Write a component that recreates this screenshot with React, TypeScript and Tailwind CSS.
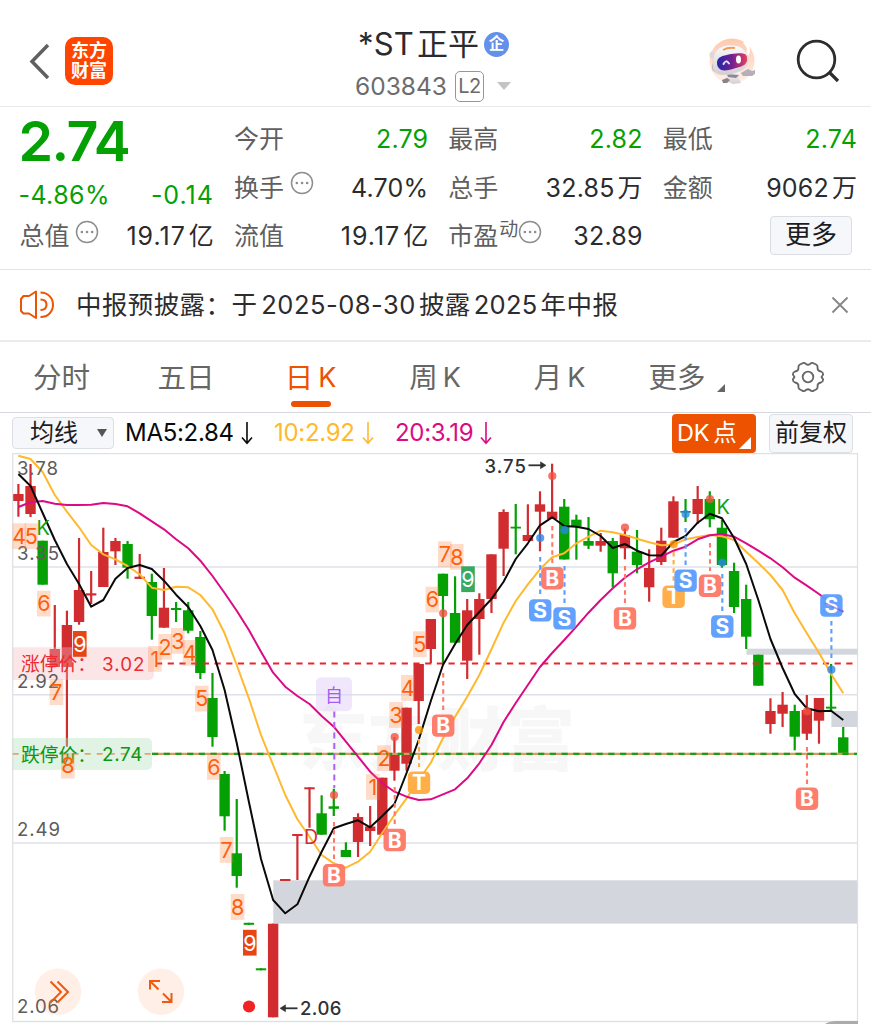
import type { ReactNode } from "react";
import clsx from "clsx";

const UP = "#d12d31";
const DOWN = "#04a004";

const candleX = (i: number) => 18.4 + i * 12.13;

// direction, high, body top, body bottom, low
type Candle = ["u" | "d", number, number, number, number];

const CANDLES: Candle[] = [
  ["u", 484, 494, 501, 516.7],
  ["u", 464, 486, 514, 517],
  ["d", 540.7, 540.7, 584.7, 584.7],
  ["u", 605, 649, 667, 667],
  ["u", 610.7, 625, 667, 746.7],
  ["u", 538, 590, 622, 624.7],
  ["u", 571, 593.3, 595.5, 604],
  ["u", 527.7, 552, 587, 587],
  ["u", 538, 541, 551.3, 565],
  ["d", 541, 544, 567.7, 578.7],
  ["u", 554, 576.7, 578.9, 578.9],
  ["d", 573.7, 582, 616, 639.7],
  ["u", 568, 607.7, 627.7, 627.7],
  ["d", 602, 608, 610, 622],
  ["d", 602, 610.3, 630.7, 633.3],
  ["d", 631, 637, 673, 679],
  ["d", 673, 698, 737, 746.7],
  ["d", 771, 774, 816.3, 830.7],
  ["d", 799, 853.3, 876, 887.7],
  ["d", 922.8, 922.8, 924.8, 924.8],
  ["d", 968.3, 968.3, 970.3, 970.3],
  ["u", 923.7, 923.7, 1017.3, 1017.3],
  ["u", 879, 879, 881, 881],
  ["u", 834, 834, 836, 880],
  ["u", 787.3, 787.3, 789.3, 827.7],
  ["d", 795.3, 813.3, 834.7, 834.7],
  ["d", 788.7, 806.3, 808.8, 816],
  ["d", 842.3, 850, 857, 857],
  ["u", 813.3, 817, 842, 857],
  ["u", 806, 826.5, 831, 846],
  ["u", 777.7, 777.7, 834.7, 834.7],
  ["u", 737, 754.3, 770.7, 780.7],
  ["u", 707.7, 707.7, 763.7, 770.7],
  ["u", 664, 664, 701, 724],
  ["u", 619, 619, 649, 663.3],
  ["d", 573.7, 573.7, 596, 663],
  ["d", 576.3, 613, 642.7, 642.7],
  ["u", 599, 610.3, 660.7, 679],
  ["u", 593.3, 599, 619, 654.7],
  ["u", 554.3, 554.3, 599, 613],
  ["u", 509.3, 512, 548.7, 576],
  ["d", 504, 526.7, 528.5, 554.3],
  ["u", 504.3, 535, 541, 541],
  ["u", 491.3, 504.3, 511.7, 551.3],
  ["u", 463.7, 511.7, 519, 519],
  ["d", 499, 506.7, 559.5, 559.5],
  ["d", 514.7, 519.7, 526.7, 559.7],
  ["d", 517, 541, 545.7, 549],
  ["u", 533, 541, 545.7, 551.7],
  ["d", 538, 541, 573.3, 587.3],
  ["u", 528.7, 535, 548.3, 559.3],
  ["d", 530, 551.7, 565, 573.3],
  ["u", 549.3, 568, 587.3, 601.7],
  ["u", 527.7, 540.7, 562, 565],
  ["u", 496.3, 501.3, 537.7, 537.7],
  ["d", 499, 511, 512.7, 522],
  ["u", 486, 499, 514, 524],
  ["d", 491.3, 499, 519.3, 527.3],
  ["d", 519.7, 527.7, 565, 567.7],
  ["d", 562.7, 571, 607, 613],
  ["d", 584.7, 599, 636.7, 649],
  ["d", 654.7, 654.7, 685.7, 685.7],
  ["u", 698.3, 711, 724, 733.7],
  ["u", 692, 704.7, 713.7, 727],
  ["d", 704.7, 711, 736.7, 750.3],
  ["u", 695, 710, 733.7, 740],
  ["u", 698, 698, 720.7, 743.7],
  ["d", 664, 706.7, 708.6, 711.7],
  ["d", 727, 737.3, 753.5, 753.5],
];

const MA5 = [
  474, 486, 513, 540, 564, 584, 606.7, 600, 578.7, 568, 565, 569, 580.7, 594.7, 607, 626, 650,
  690, 743, 801.7, 859, 900, 913.3, 904.3, 876.7, 851.7, 828.3, 824, 820.3, 827.3, 816, 804,
  773, 740, 701, 665, 644, 625, 612, 599, 581.7, 559, 543.3, 525.3, 517.3, 526, 526.7, 529, 536,
  548, 544, 550.7, 555.3, 555.6, 542, 536, 522.7, 513.7, 518.3, 538, 564, 600, 639, 668, 694,
  708.3, 711.3, 710.7, 720,
];
const MA10 = [
  455.7, 459, 472, 495, 511.7, 527.3, 545, 554.3, 559.3, 566, 574.3, 587.7, 590, 586.7, 587.3,
  595, 609.3, 633.3, 665, 698.3, 735, 765, 795, 819.3, 836.7, 855, 863.3, 867.7, 861.7, 851.7,
  833, 815, 798.3, 780, 762.7, 738.3, 716.7, 696.7, 675, 649.3, 622.7, 601, 584.3, 569.3, 557.3,
  553.3, 543.3, 536.7, 530.7, 532.3, 535, 538.7, 542.3, 545.3, 544.7, 539.3, 537, 535, 536.3,
  540, 551.7, 563, 575, 590, 613.3, 633.3, 652.7, 674, 693.3,
];
const MA20 = [
  507, 502.3, 501, 503.7, 505, 505, 504.7, 503, 504, 506.3, 513.3, 521.3, 529.3, 539.3, 548.3,
  560.7, 576, 593, 610.7, 630, 651.7, 672.7, 686.7, 696, 704, 716, 726.7, 741.7, 756.7, 771.7,
  783.3, 791.7, 796.7, 800, 799.3, 794.3, 789.3, 778.3, 763.3, 745, 722, 703, 685, 667, 653, 640,
  626.7, 612.7, 600, 588.3, 577.7, 569.3, 562.3, 556.7, 550.7, 546.7, 539.3, 535.3, 534, 536.7,
  543.3, 550.7, 558.3, 567.3, 577.7, 585.7, 594, 603.3, 611.7,
];

const toPoints = (ys: number[]) => ys.map((y, i) => `${candleX(i)},${y}`).join(" ");

// left, top, digit, fill
const COUNTS: [number, number, string, string?][] = [
  [12.5, 523.3, "4"],
  [24.6, 523.3, "5"],
  [37, 590.7, "6"],
  [49.6, 679.3, "7"],
  [61, 752.7, "8"],
  [73, 631, "9", "#e64614"],
  [148, 646, "1"],
  [158.3, 634, "2"],
  [171, 628, "3"],
  [182.8, 640, "4"],
  [195, 685.7, "5"],
  [207, 754, "6"],
  [219.8, 837, "7"],
  [230.8, 894, "8"],
  [243, 929.8, "9", "#e64614"],
  [366, 774, "1"],
  [377.3, 745.3, "2"],
  [389.3, 702, "3"],
  [401, 675, "4"],
  [413, 631.3, "5"],
  [425.5, 586.7, "6"],
  [438, 541.3, "7"],
  [450, 544, "8"],
  [461.2, 566.3, "9", "#39a860"],
];

const SIGNAL_COLORS = { B: "#fe7968", S: "#5c9dfd", T: "#ffab42" };
const DOT_COLORS = { B: "#f4513f", S: "#2a86ec", T: "#ff9500" };

// kind, x, badge center, dot, dash start, dash end
const SIGNALS: ["B" | "S" | "T", number, number, number, number, number][] = [
  ["B", 334, 875.3, 795, 822, 860],
  ["B", 394.7, 840, 737, 787, 824],
  ["T", 419, 782.7, 730, 739, 767],
  ["B", 443.2, 725.6, 613.3, 673, 710],
  ["B", 552.3, 578.2, 476, 526, 563],
  ["S", 540.2, 610.4, 538, 557, 595],
  ["S", 564.5, 618.4, 530.2, 566, 603],
  ["B", 625, 618.4, 527.5, 566, 603],
  ["T", 673.6, 596.8, 544.3, 552, 582],
  ["S", 685.6, 580.6, 514, 528, 565],
  ["B", 710, 585.8, 499, 543, 571],
  ["S", 722.3, 626.5, 562.5, 574, 611],
  ["S", 831.4, 605.5, 669.7, 621, 658],
  ["B", 807, 798.7, 711.3, 747, 784],
];

const KChart = () => (
  <svg
    viewBox="0 453 871 571"
    className="block h-[571px] w-[871px] font-['Inter','Noto_Sans_CJK_SC',sans-serif]"
  >
    <text x="299" y="765" fontSize="69" fontWeight="900" fill="#f7f7f8">
      东方财富
    </text>

    {/* Grid */}
    <g fill="none" stroke="#dfe2e9" strokeWidth="1.6">
      <path d="M12.7 567H857.5M12.7 694.8H857.5M12.7 843H857.5" />
      <path d="M12.7 453.5H857.5V1021.5H12.7Z" stroke="#e0e1e4" strokeWidth="1.3" />
    </g>

    {/* Gaps */}
    <g fill="#d3d6dc">
      <rect x="273.3" y="880.3" width="584" height="43.3" />
      <rect x="746.5" y="648.7" width="111" height="6" />
      <rect x="831.4" y="711" width="26" height="16" />
    </g>

    {/* Candles */}
    {CANDLES.map(([dir, high, top, bottom, low], i) => {
      const color = dir === "u" ? UP : DOWN;
      return (
        <g key={i} fill={color}>
          <rect x={candleX(i) - 1.1} y={high} width="2.2" height={low - high} />
          <rect x={candleX(i) - 5.2} y={top} width="10.4" height={bottom - top} />
        </g>
      );
    })}

    {/* Limit prices */}
    <path d="M12.7 647.3H149a5 5 0 0 1 5 5V675a5 5 0 0 1-5 5H12.7Z" fill="#f8b9bf" opacity=".37" />
    <path d="M12.7 738H147a5 5 0 0 1 5 5V765a5 5 0 0 1-5 5H12.7Z" fill="#b5e1bb" opacity=".4" />
    <path d="M156 663.5H853" stroke="#e9262d" strokeWidth="2" strokeDasharray="6.2 5.5" />
    <path d="M12.7 753.8H152" stroke="#dba574" strokeWidth="1.8" strokeDasharray="6 6" />
    <path d="M152 753.8H857" stroke="#d69a63" strokeWidth="2.2" />
    <path d="M152 753.8H857" stroke="#16a016" strokeWidth="2.2" strokeDasharray="6.2 5.5" />

    {/* Moving averages */}
    <g fill="none" strokeWidth="2" strokeLinejoin="round">
      <polyline points={toPoints(MA10)} stroke="#ffb92e" />
      <polyline points={toPoints(MA20)} stroke="#dc0a85" />
      <polyline points={toPoints(MA5)} stroke="#0a0a0a" />
    </g>

    {/* Axis labels */}
    <g fontSize="18.6" fill="#5c5c5c">
      <text x="17" y="474.5" textLength="41">3.78</text>
      <text x="17" y="560" textLength="42">3.35</text>
      <text x="17" y="687.8" textLength="42">2.92</text>
      <text x="17" y="836.3" textLength="43">2.49</text>
      <text x="17" y="1013.3" textLength="42">2.06</text>
    </g>

    <g fontSize="18.8">
      <text x="21" y="670.5" fill="#ee2b32">涨停价：</text>
      <text x="102" y="670.5" textLength="42.5" fill="#ee2b32">3.02</text>
      <text x="21" y="761.5" fill="#069a14">跌停价：</text>
      <text x="102" y="761" textLength="40.5" fill="#069a14">2.74</text>
    </g>

    {/* Sequence counts */}
    {COUNTS.map(([x, y, digit, fill], i) => (
      <g key={i}>
        <rect x={x} y={y} width="13.6" height="25.8" fill={fill ?? "#ff7d3c"} opacity={fill ? 1 : 0.27} />
        <text x={x + 6.8} y={y + 20.7} fontSize="21.5" textAnchor="middle" fill={fill ? "#fff" : "#ff5f0a"}>
          {digit}
        </text>
      </g>
    ))}

    <g fontSize="20" fill="#16a016">
      <text x="36.5" y="535.3">K</text>
      <text x="716.5" y="514.3">K</text>
    </g>
    <text x="304" y="843.8" fontSize="19.5" fill={UP}>D</text>

    {/* Signals */}
    {SIGNALS.map(([kind, x, y, dot, from, to], i) => (
      <g key={i}>
        <path d={`M${x} ${from}V${to}`} stroke={SIGNAL_COLORS[kind]} strokeWidth="2.1" strokeDasharray="4.5 3.6" />
        <circle cx={x} cy={dot} r="4.1" fill={DOT_COLORS[kind]} opacity=".8" />
        <rect x={x - 11.2} y={y - 11.2} width="22.4" height="22.4" rx="4.5" fill={SIGNAL_COLORS[kind]} opacity=".96" />
        <text x={x} y={y + 7.5} fontSize="21" fontWeight="700" textAnchor="middle" fill="#fff">
          {kind}
        </text>
      </g>
    ))}
    <path d="M825 603 843.3 611.7" stroke="#7a51d2" strokeWidth="1.5" opacity=".6" />

    {/* Watchlist marker */}
    <rect x="316" y="677.3" width="36" height="34" rx="5" fill="#e2cdfb" opacity=".48" />
    <text x="334" y="701.5" fontSize="18" textAnchor="middle" fill="#a55bf5">自</text>
    <path d="M334.3 711.5V788" stroke="#a862f5" strokeWidth="2" strokeDasharray="6 4.5" />

    {/* High and low */}
    <g fontSize="18.5" fontWeight="500" fill="#303133">
      <text x="484.5" y="472.5" textLength="41.5">3.75</text>
      <text x="300" y="1015.3" textLength="41.5">2.06</text>
    </g>
    <g fill="#303133" stroke="#303133" strokeWidth="1.8">
      <path d="M528.5 465.3H542" />
      <path d="M540.5 461.8 546 465.3 540.5 468.8Z" strokeWidth=".5" />
      <path d="M284 1008.3H297.5" />
      <path d="M285.5 1004.8 280 1008.3 285.5 1011.8Z" strokeWidth=".5" />
    </g>
    <circle cx="249" cy="1006.5" r="6.1" fill="#f42323" />

    {/* Floating controls */}
    <g fill="none" stroke="#ed5a10" strokeWidth="2">
      <circle cx="58" cy="991.7" r="23.2" fill="#fd6a1c" fillOpacity=".11" stroke="none" />
      <circle cx="161" cy="991.7" r="23.2" fill="#fd6a1c" fillOpacity=".11" stroke="none" />
      <path d="M50.5 981.5 61 992 50.5 1002.5M57.5 981.5 68 992 57.5 1002.5" />
      <path d="M150 989.5V981H160M150.5 981.5 158.5 989.5M171.5 993V1002H162M163 993.5 171 1001.5" />
    </g>
    <path d="M825 1024Q829 1021 837 1021H858V1024Z" fill="#a9abaf" />
  </svg>
);

const MoreDots = ({ className }: { className?: string }) => (
  <svg viewBox="0 0 24 24" className={clsx("size-6 shrink-0", className)} fill="none" stroke="#8e8e8e">
    <circle cx="12" cy="12" r="10.5" strokeWidth="1.5" />
    <path d="M6.8 12h.1M12 12h.1M17.1 12h.1" strokeWidth="2.5" strokeLinecap="round" />
  </svg>
);

const Cell = ({ label, value, green, extra }: { label: string; value: string; green?: boolean; extra?: ReactNode }) => {
  const [, num, unit] = value.match(/^([\d.%]+)(.*)$/)!;
  return (
    <div className="flex h-[48.5px] items-center justify-between">
      <span className="flex items-center text-[#5f5f5f]">
        {label}
        {extra}
      </span>
      <span className={clsx("flex items-center", green ? "text-[#04a004]" : "text-[#2b2b2e]")}>
        <span className={num.includes("1") ? "tracking-[1px]" : "tracking-[0.2px]"}>{num}</span>
        {unit && <span className="ml-[3px]">{unit}</span>}
      </span>
    </div>
  );
};

const Avatar = () => (
  <svg viewBox="0 0 48 48" className="size-12">
    <defs>
      <linearGradient id="visor" x1="0" y1="0" x2="1" y2="0">
        <stop offset="0" stopColor="#2425a8" />
        <stop offset=".5" stopColor="#732090" />
        <stop offset="1" stopColor="#e4425f" />
      </linearGradient>
      <linearGradient id="halo" x1="0" y1="0" x2="0" y2="1">
        <stop offset="0" stopColor="#ffc9ac" />
        <stop offset="1" stopColor="#fff1e9" />
      </linearGradient>
      <linearGradient id="shell" x1="0" y1="0" x2="0" y2="1">
        <stop offset="0" stopColor="#fdfbfa" />
        <stop offset="1" stopColor="#d2cdd2" />
      </linearGradient>
    </defs>
    <circle cx="24" cy="24" r="22.5" fill="url(#halo)" />
    <path d="M36 5c5 4 6 9 2 14" fill="none" stroke="#fff" strokeWidth="3" />
    <path d="M17 34h15l-1 8 2 4-8 1-6-3Z" fill="url(#shell)" />
    <path d="M33 36l7-4 4 2 3-1v4l-3 2-9 0Z" fill="#b5afba" />
    <path d="M19 37l12 1-3 3-8-1Z" fill="#8d8894" />
    <path d="M14 43l5-2 3 2-3 3h-4Z" fill="#8a828a" />
    <ellipse cx="4" cy="18" rx="2.5" ry="3.5" fill="#ddd8dc" />
    <ellipse cx="7" cy="30" rx="3" ry="4.5" fill="#b9b3bd" />
    <path
      d="M5 22C6 12 14 8 23 8c9 0 15 4 17 12 1 10-5 14-17 17C13 39 6 37 5 31Z"
      fill="url(#shell)"
      stroke="#d9d1d4"
      strokeWidth=".6"
    />
    <path d="M15 13q5-3 12-2" stroke="#f39b57" strokeWidth="2" fill="none" />
    <path d="M9 25c1-5 4-6 14-8 9-1 15-2 16 3 1 7-3 9-11 11-9 3-15 4-18-1-1-2-1-3-1-5Z" fill="url(#visor)" />
    <path d="M15.5 27q2.5-5 5.5-.5" stroke="#d7e2ff" strokeWidth="2" fill="none" strokeLinecap="round" />
    <ellipse cx="30.5" cy="22.5" rx="2.5" ry="4" fill="#fff" />
  </svg>
);

const DownArrow = () => (
  <svg viewBox="0 0 12 24" className="ml-[7px] h-6 w-3" fill="none" stroke="currentColor" strokeWidth="1.6">
    <path d="M6 1V22M1 16.5 6 22.3 11 16.5" />
  </svg>
);

const TABS = [
  { label: "分时", shift: "-ml-px" },
  { label: "五日", shift: "" },
  { label: "日", suffix: "K", shift: "ml-px", active: true },
  { label: "周", suffix: "K", shift: "ml-[2px]" },
  { label: "月", suffix: "K", shift: "ml-[3px]" },
  { label: "更多", shift: "-ml-[7px]", more: true },
];

const App = () => {
  return (
    <div className="h-[1024px] w-[871px] overflow-hidden bg-white font-['Inter','Noto_Sans_CJK_SC',sans-serif]">
      {/* Header */}
      <header className="grid h-[107px] grid-cols-[1fr_auto_1fr] border-b-[1.5px] border-[#e9e9e9] pt-[20px]">
        <div className="flex h-[81px] items-center pl-[28px]">
          <svg viewBox="0 0 22 36" className="h-9 w-[22px]" fill="none" stroke="#5f6062" strokeWidth="3.5">
            <path d="M20 2 4 18.5 20 35" />
          </svg>
          <div className="ml-[15px] flex size-12 flex-col items-center justify-center rounded-[10px] bg-[#ff4500] text-[18px] leading-[19.5px] font-bold text-white">
            <span>东方</span>
            <span>财富</span>
          </div>
        </div>
        <div className="flex w-[156px] flex-col items-center">
          <div className="-ml-1 flex h-[48px] items-center whitespace-nowrap text-[31px] text-[#2b2b2e]">
            <span className="tracking-[0.2px]">*ST</span>
            <span className="ml-[3px]">正平</span>
            <span className="ml-[5px] flex size-[25px] shrink-0 items-center justify-center rounded-full bg-[#6390ea] text-[15.5px] leading-none font-bold text-white">
              企
            </span>
          </div>
          <div className="-ml-[5px] flex h-[36px] items-center text-[24.5px] text-[#6c6c6c]">
            <span>603843</span>
            <span className="ml-2 flex h-[31px] w-[29px] items-center justify-center rounded-[5px] border-[1.5px] border-[#969696] text-[20px] tracking-[-0.5px]">
              L2
            </span>
            <svg viewBox="0 0 14 8" className="ml-[13px] h-2 w-3.5" fill="#c4c4c4">
              <path d="M0 0h14L7 8Z" />
            </svg>
          </div>
        </div>
        <div className="flex h-[81px] items-center justify-end pr-[31px]">
          <Avatar />
          <svg viewBox="0 0 44 44" className="ml-[40px] size-11" fill="none" stroke="#2d2d30" strokeWidth="2.8">
            <circle cx="20.5" cy="20.5" r="18.3" />
            <path d="M33 33 42 42" strokeWidth="3.2" />
          </svg>
        </div>
      </header>

      {/* Quote */}
      <section className="grid h-[163px] grid-cols-4 gap-x-5 border-b-[1.5px] border-[#e4e4e4] pt-[8.5px] pr-[14px] pl-[19.5px] text-[25px] whitespace-nowrap">
        <div className="text-[#04a004]">
          <div className="-ml-px flex h-[51px] items-center text-[55.5px] leading-none font-semibold tracking-[-1.5px]">
            2.74
          </div>
          <div className="flex h-[58px] items-center justify-between">
            <span className="-ml-px tracking-[0.4px]">-4.86%</span>
            <span className="tracking-[1px]">-0.14</span>
          </div>
          <div className="-mt-[12px]">
            <Cell label="总值" value="19.17亿" extra={<MoreDots className="mb-2.5 ml-[5px]" />} />
          </div>
        </div>
        <div>
          <Cell label="今开" value="2.79" green />
          <Cell label="换手" value="4.70%" extra={<MoreDots className="mb-2.5 ml-1.5" />} />
          <Cell label="流值" value="19.17亿" />
        </div>
        <div>
          <Cell label="最高" value="2.82" green />
          <Cell label="总手" value="32.85万" />
          <Cell
            label="市盈"
            value="32.89"
            extra={
              <>
                <span className="mb-3.5 ml-px text-[19px]">动</span>
                <MoreDots className="mb-2.5" />
              </>
            }
          />
        </div>
        <div>
          <Cell label="最低" value="2.74" green />
          <Cell label="金额" value="9062万" />
          <div className="flex h-[45px] items-center justify-end">
            <button className="mr-[5px] h-[39px] w-[82px] rounded-[4px] border border-[#dadde3] bg-[#f6f7fa] text-[26px] leading-none text-[#1d1d1f]">
              更多
            </button>
          </div>
        </div>
      </section>

      {/* Notice */}
      <section className="flex h-[72px] items-center border-b-2 border-[#ebebeb] pr-[22px] pl-[20px] text-[25.5px] text-[#2c2c2e]">
        <svg viewBox="0 0 34 30" className="h-[30px] w-[34px]" fill="none" stroke="#ed5306" strokeWidth="2" strokeLinejoin="round">
          <path d="M1 9 3.5 6H9L16 1.5V28L9 23.5H3.5L1 21Z" />
          <path d="M20.5 9.5C25 9.5 26.5 12 26.5 14.8S25 20 20.5 20M20.5 2.5C28 2.5 33 8 33 14.8S28 27 20.5 27" />
        </svg>
        <div className="ml-[22px] flex items-center whitespace-nowrap">
          <span className="tracking-[0.4px]">中报预披露：于</span>
          <span className="ml-[4px] tracking-[0.5px]">2025-08-30</span>
          <span className="ml-[3px] tracking-[0.4px]">披露</span>
          <span className="ml-[3px] tracking-[0.3px]">2025</span>
          <span className="ml-[3px] tracking-[0.4px]">年中报</span>
        </div>
        <svg viewBox="0 0 18 18" className="ml-auto size-[18px]" stroke="#858585" strokeWidth="1.8">
          <path d="M1.5 1.5 16.5 16.5M16.5 1.5 1.5 16.5" />
        </svg>
      </section>

      {/* Period tabs */}
      <nav className="flex h-[71px] border-b-[1.5px] border-[#d5d9de] text-[28.5px] text-[#666]">
        {TABS.map(({ label, suffix, shift, active, more }) => (
          <div
            key={label}
            className={clsx(
              "flex w-[124px] flex-col items-center whitespace-nowrap pt-[14px]",
              active && "text-[#ed5200]"
            )}
          >
            <span className={clsx("flex h-11 items-center", shift)}>
              {label}
              {suffix && <span className="ml-[5px] text-[27px]">{suffix}</span>}
              {more && (
                <svg viewBox="0 0 8 8" className="mt-5 -mr-4 ml-[11px] size-2" fill="#666">
                  <path d="M8 0V8H0Z" />
                </svg>
              )}
            </span>
            {active && <span className="mt-px ml-0.5 h-1.5 w-10 rounded-full bg-[#ed5200]" />}
          </div>
        ))}
        <div className="flex flex-1 justify-center pt-[19px]">
          <svg viewBox="0 0 34 32" className="h-8 w-[34px]" fill="none" stroke="#666" strokeWidth="1.8" strokeLinejoin="round">
            <path d="M11 2.5Q13 1 15 3Q17 4.5 19 3Q21 1 23 2.5L25 3.5Q27 4.5 26.5 7Q26.5 10 30 10.5Q32 11 32.2 13.5Q31.5 14.5 30.5 16Q31.5 17.5 32.2 18.5Q32 21 30 21.5Q26.5 22 26.5 25Q27 27.5 25 28.5L23 29.5Q21 31 19 29Q17 27.5 15 29Q13 31 11 29.5L9 28.5Q7 27.5 7.5 25Q7.5 22 4 21.5Q2 21 1.8 18.5Q2.5 17.5 3.5 16Q2.5 14.5 1.8 13.5Q2 11 4 10.5Q7.5 10 7.5 7Q7 4.5 9 3.5Z" />
            <circle cx="17" cy="16" r="5.3" />
          </svg>
        </div>
      </nav>

      {/* Indicators */}
      <div className="flex h-10 items-center pr-[18px] pl-[12px] text-[24px] tracking-[-0.3px] whitespace-nowrap">
        <div className="flex h-8 w-[102px] items-center rounded-[4px] border border-[#dcdfe4] bg-[#f6f7fa] pl-[17px] text-[24px] tracking-normal text-[#1d1d1f]">
          均线
          <svg viewBox="0 0 10 8" className="ml-auto mr-[6px] h-2 w-2.5" fill="#555">
            <path d="M0 0h10L5 8Z" />
          </svg>
        </div>
        <span className="ml-[11px] flex w-[149px] items-center text-[#0a0a0a]">
          MA5:2.84
          <DownArrow />
        </span>
        <span className="flex w-[121px] items-center text-[#ffb92e]">
          10:2.92
          <DownArrow />
        </span>
        <span className="flex items-center text-[#dc0a85]">
          20:3.19
          <DownArrow />
        </span>
        <div className="ml-auto flex h-[39px] w-[84px] items-end rounded-[4px] bg-[#ed5200] text-[23.5px] text-white">
          <span className="flex h-[39px] items-center pl-[5px]">
            DK<span className="ml-[4px]">点</span>
          </span>
          <svg viewBox="0 0 12 12" className="mb-1 ml-[3px] size-3" fill="#fff">
            <path d="M12 0V12H0Z" />
          </svg>
        </div>
        <div className="ml-[13px] flex h-[39px] w-[84px] items-center justify-center rounded-[4px] border border-[#dcdfe4] bg-[#f6f7fa] text-[24px] tracking-normal text-[#1d1d1f]">
          前复权
        </div>
      </div>

      <KChart />
    </div>
  );
};

export default App;
